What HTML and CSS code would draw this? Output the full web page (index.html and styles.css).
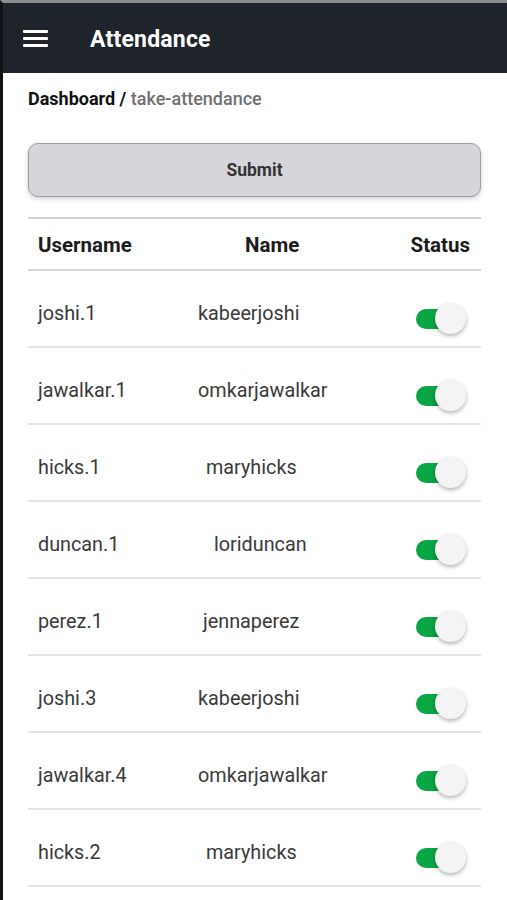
FILE: index.html
```html
<!DOCTYPE html>
<html lang="en">
<head>
  <meta charset="utf-8">
  <title>Attendance</title>
  <meta name="viewport" content="width=device-width, initial-scale=1">
  <link rel="stylesheet" href="styles.css">
</head>
<body>
  <div class="app">
    <header class="topbar">
      <span class="menu-btn">
        <svg width="25" height="17" viewBox="0 0 25 17">
          <rect x="0" y="0" width="25" height="3" rx="1" fill="#fff"/>
          <rect x="0" y="7" width="25" height="3" rx="1" fill="#fff"/>
          <rect x="0" y="14" width="25" height="3" rx="1" fill="#fff"/>
        </svg>
      </span>
      <h1 class="title">Attendance</h1>
    </header>

    <main class="content">
      <div class="crumbs">
        <span class="crumb-home">Dashboard /</span>
        <span class="crumb-page">take-attendance</span>
      </div>

      <button class="submit-btn">Submit</button>

      <div class="att-table">
        <div class="row head">
          <span class="c-user">Username</span>
          <span class="c-name">Name</span>
          <span class="c-status">Status</span>
        </div>
        <div class="row">
          <span class="c-user">joshi.1</span>
          <span class="c-name n-a">kabeerjoshi</span>
          <span class="c-status"><span class="toggle on"></span></span>
        </div>
        <div class="row">
          <span class="c-user">jawalkar.1</span>
          <span class="c-name n-a">omkarjawalkar</span>
          <span class="c-status"><span class="toggle on"></span></span>
        </div>
        <div class="row">
          <span class="c-user">hicks.1</span>
          <span class="c-name n-b">maryhicks</span>
          <span class="c-status"><span class="toggle on"></span></span>
        </div>
        <div class="row">
          <span class="c-user">duncan.1</span>
          <span class="c-name n-c">loriduncan</span>
          <span class="c-status"><span class="toggle on"></span></span>
        </div>
        <div class="row">
          <span class="c-user">perez.1</span>
          <span class="c-name n-d">jennaperez</span>
          <span class="c-status"><span class="toggle on"></span></span>
        </div>
        <div class="row">
          <span class="c-user">joshi.3</span>
          <span class="c-name n-a">kabeerjoshi</span>
          <span class="c-status"><span class="toggle on"></span></span>
        </div>
        <div class="row">
          <span class="c-user">jawalkar.4</span>
          <span class="c-name n-a">omkarjawalkar</span>
          <span class="c-status"><span class="toggle on"></span></span>
        </div>
        <div class="row">
          <span class="c-user">hicks.2</span>
          <span class="c-name n-b">maryhicks</span>
          <span class="c-status"><span class="toggle on"></span></span>
        </div>
      </div>
    </main>
  </div>
</body>
</html>
```

FILE: styles.css
```css
* {
  box-sizing: border-box;
  margin: 0;
  padding: 0;
}

body {
  font-family: Roboto, "Liberation Sans", Arial, sans-serif;
  background-color: #fff;
  overflow: hidden;
}

.app {
  min-height: 900px;
  border-top: 3px solid #8c8d90;
  border-left: 3px solid #111;
}

/* top bar */
.topbar {
  height: 70px;
  background-color: #1f232b;
  display: flex;
  align-items: center;
  padding-left: 20px;
}

.menu-btn {
  display: flex;
  width: 25px;
  margin-top: 1px;
}

.title {
  margin-left: 42px;
  margin-top: 3px;
  color: #fff;
  font-size: 23px;
  font-weight: 700;
  letter-spacing: 0.2px;
}

/* page body */
.content {
  padding: 14px 26px 0 25px;
}

.crumbs {
  font-size: 18px;
  font-weight: 500;
  height: 24px;
  line-height: 24px;
}

.crumb-home {
  color: #111;
  font-weight: 700;
}

.crumb-page {
  color: #707074;
}

.submit-btn {
  display: block;
  width: 100%;
  height: 54px;
  margin-top: 32px;
  background-color: #d6d6da;
  border: 1px solid #9d9da2;
  border-radius: 10px;
  box-shadow: 0 2px 5px rgba(0, 0, 0, 0.18);
  font-family: inherit;
  font-size: 17.5px;
  font-weight: 700;
  color: #333;
}

/* table */
.att-table {
  margin-top: 20px;
  border-top: 2px solid #d2d2d2;
}

.row {
  display: grid;
  grid-template-columns: 160px 1fr 80px;
  align-items: center;
  height: 77px;
  padding: 10px 11px 0 10px;
  border-bottom: 2px solid #e4e4e4;
  font-size: 19.8px;
  color: #3a3a3a;
}

.row.head {
  height: 52px;
  padding-top: 1px;
  border-bottom-color: #d6d6d6;
  font-size: 20.5px;
  font-weight: 700;
  color: #1c1c1c;
}

.row.head .c-name {
  padding-left: 47px;
}

.c-status {
  display: flex;
  justify-content: flex-end;
}

.n-a { padding-left: 0; }
.n-b { padding-left: 8px; }
.n-c { padding-left: 16px; }
.n-d { padding-left: 5px; }

/* switch */
.toggle {
  position: relative;
  display: block;
  width: 55px;
  height: 32px;
  margin-top: 10px;
}

.toggle::before {
  content: "";
  position: absolute;
  left: 1px;
  top: 6px;
  width: 40px;
  height: 20px;
  border-radius: 10px;
  background-color: #0aa544;
}

.toggle::after {
  content: "";
  position: absolute;
  left: 20px;
  top: 0;
  width: 31px;
  height: 31px;
  border-radius: 50%;
  background-color: #f4f4f4;
  box-shadow: 0 2px 4px rgba(0, 0, 0, 0.3);
}
```
